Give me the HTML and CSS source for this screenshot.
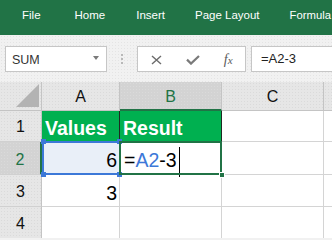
FILE: index.html
```html
<!DOCTYPE html>
<html>
<head>
<meta charset="utf-8">
<title>Excel formula</title>
<link rel="stylesheet" href="styles.css">
</head>
<body>
<div class="app">
  <nav class="ribbon">
    <span class="tab tab-file">File</span>
    <span class="tab tab-home">Home</span>
    <span class="tab">Insert</span>
    <span class="tab">Page Layout</span>
    <span class="tab tab-last">Formula</span>
  </nav>

  <div class="formula-bar">
    <div class="name-box"><span class="name-text">SUM</span><span class="caret"></span></div>
    <div class="grip"><i></i><i></i><i></i></div>
    <div class="fx-buttons">
      <span class="fx-slot">
        <svg class="icon-x" width="11" height="10" viewBox="0 0 11 10"><path d="M1 1 L10 9 M10 1 L1 9" stroke="#6b6b6b" stroke-width="1.4" fill="none"/></svg>
      </span>
      <span class="fx-slot">
        <svg class="icon-check" width="14" height="10" viewBox="0 0 14 10"><path d="M1 4.6 L5 8.6 L13 1" stroke="#7a7a7a" stroke-width="2.2" fill="none"/></svg>
      </span>
      <span class="fx-slot"><span class="fx">f<span class="fx-x">x</span></span></span>
    </div>
    <div class="formula-input">=A2-3</div>
  </div>

  <div class="sheet">
    <div class="hd corner"><span class="tri"></span></div>
    <div class="hd col">A</div>
    <div class="hd col col-active">B</div>
    <div class="hd col">C</div>
    <div class="hd col col-last"></div>

    <div class="hd row">1</div>
    <div class="cell head-cell">Values</div>
    <div class="cell head-cell">Result</div>
    <div class="cell"></div>
    <div class="cell cell-last"></div>

    <div class="hd row row-active">2</div>
    <div class="cell num ref">6<span class="h h-tl"></span><span class="h h-tr"></span><span class="h h-bl"></span><span class="h h-br"></span></div>
    <div class="cell active"><span class="eq">=</span><span class="ref-text">A2</span><span class="eq">-3</span><span class="cursor"></span><span class="fill-handle"></span></div>
    <div class="cell"></div>
    <div class="cell cell-last"></div>

    <div class="hd row">3</div>
    <div class="cell num">3</div>
    <div class="cell"></div>
    <div class="cell"></div>
    <div class="cell cell-last"></div>

    <div class="hd row">4</div>
    <div class="cell"></div>
    <div class="cell"></div>
    <div class="cell"></div>
    <div class="cell cell-last"></div>
  </div>
</div>
</body>
</html>
```

FILE: styles.css
```css
* { box-sizing: border-box; }

html, body {
  margin: 0;
  padding: 0;
  width: 332px;
  height: 238px;
  overflow: hidden;
  background: #f1f1f1;
  font-family: "Liberation Sans", Arial, sans-serif;
}

.app {
  width: 332px;
  height: 238px;
  overflow: hidden;
}

/* ---------- ribbon ---------- */
.ribbon {
  height: 35px;
  background: #217346;
  display: flex;
  align-items: flex-start;
  padding: 9px 0 0 22px;
  white-space: nowrap;
  overflow: hidden;
}

.tab {
  color: #ffffff;
  font-size: 11.5px;
  line-height: 12px;
  margin-right: 30px;
  flex: none;
}

.tab-file { margin-right: 34px; }
.tab-home { margin-right: 31px; }
.tab-last { margin-right: 0; font-size: 11.3px; }

/* ---------- formula bar ---------- */
.formula-bar {
  height: 47px;
  padding: 11px 0 10px 5px;
  display: flex;
  background-color: #f1f1f1;
  background-image: radial-gradient(circle, #e4e4e4 0.6px, transparent 0.9px);
  background-size: 3px 3px;
}

.name-box {
  width: 102px;
  height: 26px;
  background: #ffffff;
  border: 1px solid #c6c6c6;
  display: flex;
  align-items: center;
  justify-content: space-between;
  padding: 0 7px 0 6px;
  flex: none;
}

.name-text {
  font-size: 12.5px;
  color: #333333;
  padding-top: 1px;
}

.caret {
  width: 0;
  height: 0;
  border-left: 3.5px solid transparent;
  border-right: 3.5px solid transparent;
  border-top: 4px solid #7a7a7a;
  margin-top: -2px;
}

.grip {
  width: 30px;
  height: 26px;
  flex: none;
  display: flex;
  flex-direction: column;
  align-items: center;
  justify-content: center;
  gap: 2px;
}

.grip i {
  display: block;
  width: 2px;
  height: 2px;
  background: #b8b8b8;
}

.fx-buttons {
  width: 109px;
  height: 26px;
  flex: none;
  background: #ffffff;
  border: 1px solid #c6c6c6;
  display: flex;
  align-items: center;
}

.fx-slot {
  flex: 1;
  display: flex;
  align-items: center;
  justify-content: center;
}

.icon-x { margin-left: 2px; margin-top: 1px; }
.icon-check { margin-left: 3px; margin-top: 2px; }

.fx {
  font-family: "Liberation Serif", "Times New Roman", serif;
  font-style: italic;
  font-size: 14px;
  color: #5a5a5a;
  margin-left: 2px;
  margin-top: 1px;
}

.fx-x {
  font-size: 11px;
}

.formula-input {
  flex: 1;
  height: 26px;
  margin-left: 5px;
  margin-right: -3px;
  background: #ffffff;
  border: 1px solid #c6c6c6;
  font-size: 13px;
  color: #222222;
  padding: 5px 0 0 9px;
  line-height: 14px;
}

/* ---------- sheet ---------- */
.sheet {
  display: grid;
  grid-template-columns: 42px 78px 102px 102px 8px;
  grid-template-rows: 29px 31px 33px 32px 32px;
  background: #ffffff;
}

.hd {
  background-color: #e6e6e6;
  background-image: radial-gradient(circle, #dadada 0.6px, transparent 0.9px);
  background-size: 3px 3px;
  border-right: 1px solid #c4c4c4;
  border-bottom: 1px solid #c4c4c4;
  color: #111111;
  font-size: 16px;
  line-height: 16px;
  display: flex;
  align-items: flex-end;
  justify-content: center;
  padding-bottom: 4px;
}

.corner {
  justify-content: flex-end;
  padding: 0 2px 3px 0;
}

.tri {
  width: 0;
  height: 0;
  border-left: 23px solid transparent;
  border-bottom: 23px solid #b3b3b3;
}

.col { padding-bottom: 5px; }
.col-last { border-right: none; }

.col-active {
  background-color: #d3d3d3;
  color: #217346;
  border-bottom: 2px solid #217346;
  padding-bottom: 4px;
}

.row {
  padding-bottom: 6px;
  border-bottom-color: #d0d0d0;
}

.row-active {
  background-color: #d3d3d3;
  color: #217346;
  border-right: 2px solid #217346;
}

.cell {
  position: relative;
  border-right: 1px solid #d4d4d4;
  border-bottom: 1px solid #d4d4d4;
  font-size: 19.5px;
  line-height: 20px;
  color: #000000;
  display: flex;
  align-items: flex-end;
  padding: 0 3px 3px 3px;
  white-space: nowrap;
}

.cell-last { border-right: none; }

.head-cell {
  background: #00b050;
  color: #ffffff;
  font-weight: bold;
  border-right-color: #1f2a22;
  padding-left: 3px;
}

.num {
  justify-content: flex-end;
  padding-right: 2px;
}

/* referenced range A2 */
.ref {
  background: #e9eff8;
  padding-bottom: 4px;
}

.ref::after {
  content: "";
  position: absolute;
  left: 0;
  top: -1px;
  right: -2px;
  bottom: -1px;
  border: 2px solid #3c78d8;
  z-index: 1;
}

.h {
  position: absolute;
  width: 5px;
  height: 5px;
  background: #3c78d8;
  z-index: 2;
}

.h-tl { left: -1px; top: -3px; }
.h-tr { right: -3px; top: -3px; }
.h-bl { left: -1px; bottom: -3px; }
.h-br { right: -3px; bottom: -3px; }

/* active edited cell B2 */
.active {
  padding-left: 4px;
  padding-bottom: 4px;
}

.active::after {
  content: "";
  position: absolute;
  left: -1px;
  top: -1px;
  right: -1px;
  bottom: -1px;
  border: 2px solid #217346;
  z-index: 3;
}

.ref-text { color: #3c78d8; }

.cursor {
  display: inline-block;
  width: 1px;
  height: 30px;
  background: #000000;
  vertical-align: -7px;
  margin: -10px 0 -7px 2px;
}

.fill-handle {
  position: absolute;
  right: -4px;
  bottom: -4px;
  width: 6px;
  height: 6px;
  background: #217346;
  border: 1px solid #ffffff;
  z-index: 4;
}
```
